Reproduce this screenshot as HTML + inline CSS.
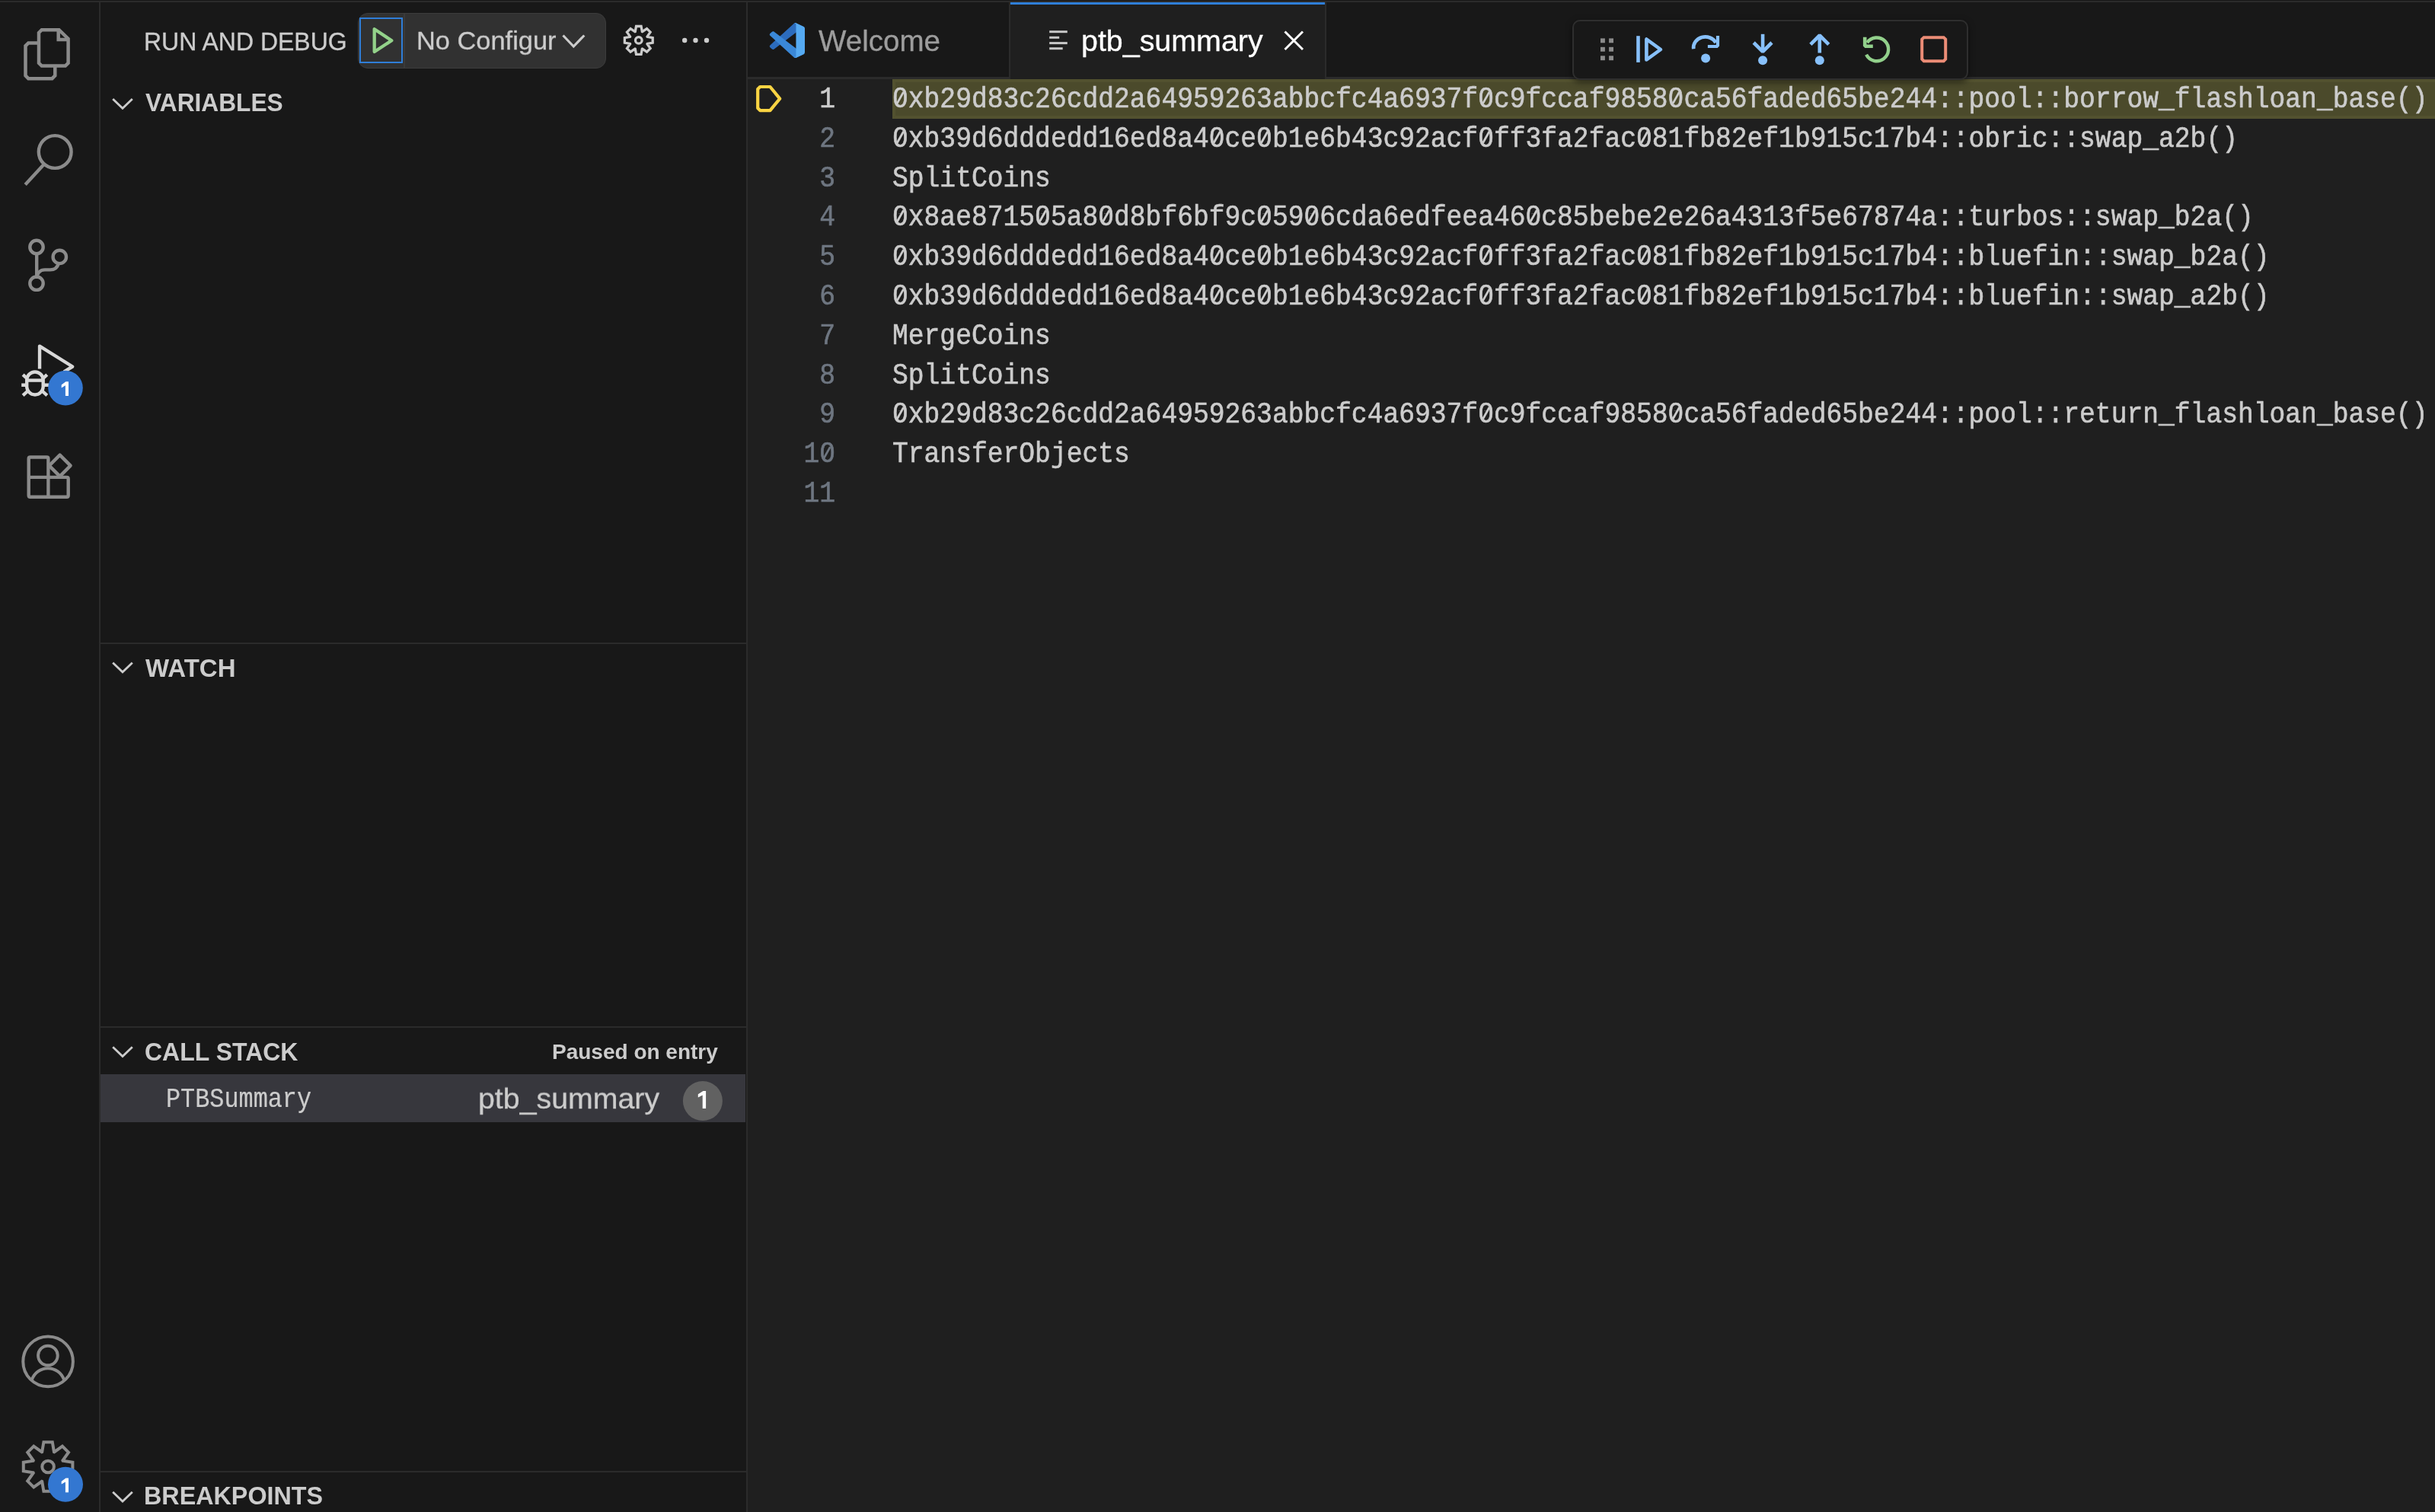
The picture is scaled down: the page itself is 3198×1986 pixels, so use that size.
<!DOCTYPE html>
<html><head><meta charset="utf-8">
<style>
html,body{margin:0;padding:0;width:3198px;height:1986px;overflow:hidden;background:#181818;}
body{position:relative;font-family:"Liberation Sans",sans-serif;color:#cccccc;}
.a{position:absolute;}
.t{position:absolute;white-space:pre;line-height:1;-webkit-font-smoothing:antialiased;will-change:transform;}
svg.ic{position:absolute;left:0;top:0;}
</style></head><body>
<div class="a" style="left:0px;top:0px;width:3198px;height:1px;background:#171717;"></div>
<div class="a" style="left:0px;top:1px;width:3198px;height:2px;background:#2b2b2b;"></div>
<div class="a" style="left:0px;top:3px;width:130px;height:1983px;background:#181818;"></div>
<div class="a" style="left:130px;top:3px;width:2px;height:1983px;background:#2b2b2b;"></div>
<div class="a" style="left:132px;top:3px;width:848px;height:1983px;background:#181818;"></div>
<div class="a" style="left:980px;top:3px;width:2px;height:1983px;background:#2b2b2b;"></div>
<div class="a" style="left:982px;top:3px;width:2216px;height:1983px;background:#1f1f1f;"></div>
<div class="a" style="left:982px;top:3px;width:2216px;height:98px;background:#181818;"></div>
<div class="a" style="left:982px;top:101px;width:2216px;height:3px;background:#2b2b2b;"></div>
<div class="a" style="left:1325px;top:3px;width:2px;height:101px;background:#2b2b2b;"></div>
<div class="a" style="left:1327px;top:3px;width:413px;height:101px;background:#1f1f1f;"></div>
<div class="a" style="left:1740px;top:3px;width:2px;height:101px;background:#2b2b2b;"></div>
<div class="a" style="left:1327px;top:3px;width:413px;height:3px;background:#2f7ed8;"></div>
<div class="a" style="left:470px;top:17px;width:326px;height:72.5px;background:#313131;border:1px solid #3c3c3c;box-sizing:border-box;border-radius:13px;"></div>
<div class="a" style="left:472px;top:23px;width:57.2px;height:60px;background:transparent;border:2px solid #2f7ed8;box-sizing:border-box;"></div>
<div class="a" style="left:529.5px;top:18px;width:2px;height:70.5px;background:#3a3a3a;"></div>
<div class="a" style="left:132px;top:844px;width:848px;height:2px;background:#2b2b2b;"></div>
<div class="a" style="left:132px;top:1348px;width:848px;height:2px;background:#2b2b2b;"></div>
<div class="a" style="left:132px;top:1932px;width:848px;height:2px;background:#2b2b2b;"></div>
<div class="a" style="left:132px;top:1411px;width:847px;height:63px;background:#37373d;"></div>
<div class="a" style="left:1172px;top:104px;width:2034px;height:52px;background:#4b4a2b;box-shadow:inset 0 0 0 4px #52512f;"></div>
<div class="a" style="left:2065px;top:26.3px;width:520px;height:78.5px;background:#181818;border:2px solid #2e2e2e;box-sizing:border-box;border-radius:10px;box-shadow:0 3px 9px rgba(0,0,0,0.5);"></div>
<svg class="ic" width="3198" height="1986" viewBox="0 0 3198 1986">
<g fill="none" stroke="#8b8b8b" stroke-width="4.5" stroke-linejoin="miter"><path d="M51,43 L54.8,39.2 L77.5,39.2 L89.6,51 L89.6,82.8 L85.8,86.6 L54.8,86.6 L51,82.8 Z"/><path d="M76.7,39.2 L76.7,51.9 L89.6,51.9"/><path d="M51,56.5 L37.3,56.5 L33.5,60.3 L33.5,99.4 L37.3,103.2 L68.5,103.2 L72.3,99.4 L72.3,86.6"/></g>
<g fill="none" stroke="#8b8b8b" stroke-width="4.4"><circle cx="72.2" cy="199.5" r="21.4"/><path d="M57.6,216 L33.2,242.6"/></g>
<g fill="none" stroke="#8b8b8b" stroke-width="4.4"><circle cx="48" cy="324.5" r="8.7"/><circle cx="48" cy="372.2" r="8.7"/><circle cx="78.3" cy="337.4" r="8.7"/><path d="M48.2,333.2 L48.2,363.5"/><path d="M48.2,366 C48.6,358 53,354.4 59,354.4 L66,354.4 C72,354.4 75.5,351 77,345.8"/></g>
<g fill="none" stroke="#d8d8d8" stroke-width="4.4"><path d="M52.05,484.5 L52.05,454.6 L95.2,481.5 L84,488.3" stroke-linejoin="round"/><path d="M35.2,499.2 A10.75,10.75 0 0 1 56.7,499.2 L56.7,507.6 A10.75,10.9 0 0 1 35.2,507.6 Z"/><path d="M35.2,499.6 L56.7,499.6"/><path d="M28.2,505.7 L35.2,505.7 M56.7,505.7 L64,505.7 M30.1,492.2 L36,497.6 M61.8,492.2 L55.9,497.6 M30.1,519.4 L36,514 M61.8,519.4 L55.9,514"/></g>
<circle cx="86" cy="509.6" r="22.8" fill="#3377d1"/>
<path fill="#ffffff" d="M80.7,505.6 L86.4,501.2 L90,501.2 L90,520 L85.9,520 L85.9,506.2 L80.7,509.4 Z"/>
<g fill="none" stroke="#8b8b8b" stroke-width="4.4" stroke-linejoin="round"><path d="M39.7,600.5 L61.4,600.5 Q63.4,600.5 63.4,602.5 L63.4,652.7 M37.7,602.5 Q37.7,600.5 39.7,600.5 M37.7,602.5 L37.7,650.7 Q37.7,652.7 39.7,652.7 L87.7,652.7 Q89.7,652.7 89.7,650.7 L89.7,628.9 Q89.7,626.9 87.7,626.9 L37.7,626.9"/><path d="M78.6,597.6 L92.6,611.6 L78.6,625.6 L64.6,611.6 Z"/></g>
<g fill="none" stroke="#8b8b8b" stroke-width="4"><circle cx="63.1" cy="1788.4" r="32.8"/><circle cx="62.9" cy="1780.5" r="12.8"/><path d="M41.8,1812.4 A22.3,22.3 0 0 1 84.1,1812.4"/></g>
<g fill="none" stroke="#8b8b8b" stroke-width="4"><path d="M55.23,1907.03 L57.40,1894.20 L68.80,1894.20 L70.97,1907.03 L71.31,1907.17 L81.91,1899.63 L89.97,1907.69 L82.43,1918.29 L82.57,1918.63 L95.40,1920.80 L95.40,1932.20 L82.57,1934.37 L82.43,1934.71 L89.97,1945.31 L81.91,1953.37 L71.31,1945.83 L70.97,1945.97 L68.80,1958.80 L57.40,1958.80 L55.23,1945.97 L54.89,1945.83 L44.29,1953.37 L36.23,1945.31 L43.77,1934.71 L43.63,1934.37 L30.80,1932.20 L30.80,1920.80 L43.63,1918.63 L43.77,1918.29 L36.23,1907.69 L44.29,1899.63 L54.89,1907.17Z"/><circle cx="63.1" cy="1926.5" r="7.8"/></g>
<circle cx="86" cy="1949.8" r="23" fill="#3377d1"/>
<path fill="#ffffff" d="M80.7,1945.8 L86.4,1941.4 L90,1941.4 L90,1960.2 L85.9,1960.2 L85.9,1946.4 L80.7,1949.6 Z"/>
<path d="M491.7,38.3 L491.7,68 L514.3,53.2 Z" fill="none" stroke="#93d28a" stroke-width="4.3" stroke-linejoin="round"/>
<path d="M739.5,46.5 L753.3,61 L767.3,46.5" fill="none" stroke="#cccccc" stroke-width="3.2"/>
<g fill="none" stroke="#cccccc" stroke-width="3.3"><path d="M834.23,41.59 L835.55,34.48 L842.05,34.48 L843.37,41.59 L843.57,41.67 L849.53,37.58 L854.12,42.17 L850.03,48.13 L850.11,48.33 L857.22,49.65 L857.22,56.15 L850.11,57.47 L850.03,57.67 L854.12,63.63 L849.53,68.22 L843.57,64.13 L843.37,64.21 L842.05,71.32 L835.55,71.32 L834.23,64.21 L834.03,64.13 L828.07,68.22 L823.48,63.63 L827.57,57.67 L827.49,57.47 L820.38,56.15 L820.38,49.65 L827.49,48.33 L827.57,48.13 L823.48,42.17 L828.07,37.58 L834.03,41.67Z"/><circle cx="838.8" cy="52.9" r="4.3"/></g>
<g fill="#cccccc"><circle cx="899.2" cy="53" r="3.2"/><circle cx="913.5" cy="53" r="3.2"/><circle cx="928" cy="53" r="3.2"/></g>
<path d="M148.2,130 L161,142.3 L173.8,130" fill="none" stroke="#cccccc" stroke-width="2.8"/>
<path d="M148.2,870.5 L161,882.8 L173.8,870.5" fill="none" stroke="#cccccc" stroke-width="2.8"/>
<path d="M148.2,1375.2 L161,1387.6 L173.8,1375.2" fill="none" stroke="#cccccc" stroke-width="2.8"/>
<path d="M148.2,1959.7 L161,1972 L173.8,1959.7" fill="none" stroke="#cccccc" stroke-width="2.8"/>
<g transform="translate(1010.8,30) scale(0.462)"><path fill="#2c6cbd" d="M96.4614 10.7962L75.8569 0.875542C73.4719 -0.272773 70.6217 0.211611 68.75 2.08333L1.29858 63.5832C-0.515693 65.2373 -0.513607 68.0937 1.30308 69.7452L6.81272 74.754C8.29793 76.1042 10.5347 76.2036 12.1338 74.9905L93.3609 13.3699C96.0859 11.3026 100 13.2462 100 16.6667V16.4275C100 14.0265 98.6246 11.8378 96.4614 10.7962Z"/><path fill="#3a88d8" d="M96.4614 89.2038L75.8569 99.1245C73.4719 100.273 70.6217 99.7884 68.75 97.9167L1.29858 36.4169C-0.515693 34.7627 -0.513607 31.9063 1.30308 30.2548L6.81272 25.246C8.29793 23.8958 10.5347 23.7964 12.1338 25.0095L93.3609 86.6301C96.0859 88.6974 100 86.7538 100 83.3334V83.5726C100 85.9735 98.6246 88.1622 96.4614 89.2038Z"/><path fill="#55aaf2" d="M75.8578 99.1263C73.4721 100.274 70.6219 99.7885 68.75 97.9166C71.0564 100.223 75 98.5895 75 95.3278V4.67213C75 1.41039 71.0564 -0.223106 68.75 2.08329C70.6219 0.211402 73.4721 -0.273666 75.8578 0.873633L96.4587 10.7807C98.6234 11.8217 100 14.0112 100 16.4132V83.5871C100 85.9891 98.6234 88.1786 96.4586 89.2196L75.8578 99.1263Z"/></g>
<g fill="#c8c8c8"><rect x="1378.2" y="40.2" width="23.6" height="3"/><rect x="1378.2" y="47.8" width="13" height="3"/><rect x="1378.2" y="55.1" width="23.6" height="3"/><rect x="1378.2" y="62.2" width="17.5" height="3"/></g>
<path d="M1687.5,41.5 L1711,65 M1711,41.5 L1687.5,65" fill="none" stroke="#ffffff" stroke-width="3"/>
<path d="M998.2,114 L1011.4,114 L1024.2,129.6 L1011.4,145.1 L998.2,145.1 L995.2,142.1 L995.2,117 Z" fill="none" stroke="#fad443" stroke-width="4.2" stroke-linejoin="round"/>
<g fill="#8b8b8b"><rect x="2102" y="50.4" width="5.9" height="5.9"/><rect x="2102" y="61.8" width="5.9" height="5.9"/><rect x="2102" y="73.3" width="5.9" height="5.9"/><rect x="2113.1" y="50.4" width="5.9" height="5.9"/><rect x="2113.1" y="61.8" width="5.9" height="5.9"/><rect x="2113.1" y="73.3" width="5.9" height="5.9"/></g>
<g fill="none" stroke="#87c0fb" stroke-width="4.6"><path d="M2151.5,47.2 L2151.5,81.9"/><path d="M2162.4,51.5 L2162.4,78.5 L2181,65 Z" stroke-linejoin="round"/><path d="M2224.2,64.3 A15.6,14.2 0 0 1 2253.5,56"/><path d="M2253.9,46.9 L2258.1,46.9 L2258.1,60.5 L2255.7,62.9 L2242.9,62.9 L2242.9,59.1 L2253.9,59.1 Z" fill="#87c0fb" stroke="none"/><path d="M2315.1,44.8 L2315.1,67"/><path d="M2303.2,56 L2315.1,67.9 L2327,56" stroke-linejoin="bevel"/><path d="M2389.8,69.5 L2389.8,47"/><path d="M2377.9,58.4 L2389.8,46.5 L2401.7,58.4" stroke-linejoin="bevel"/></g>
<g fill="#87c0fb"><circle cx="2240.1" cy="76.4" r="6"/><circle cx="2315.1" cy="79.3" r="6"/><circle cx="2389.8" cy="79.3" r="6"/></g>
<path d="M2451.1,71.8 A15.35,15.35 0 1 0 2452.2,56.05" fill="none" stroke="#92d08b" stroke-width="4.4"/>
<path d="M2446.9,48.8 L2451.5,48.8 L2451.5,58.4 L2459.8,58.4 L2459.8,63 L2449.3,63 L2446.9,60.6 Z" fill="#92d08b"/>
<path d="M2526.7,49.2 L2552.7,49.2 L2555.2,51.7 L2555.2,77.7 L2552.7,80.2 L2526.7,80.2 L2524.2,77.7 L2524.2,51.7 Z" fill="none" stroke="#eb8c76" stroke-width="4"/>
<circle cx="922.9" cy="1446" r="26" fill="#616161"/>
<path fill="#ffffff" d="M916.8,1437.3 L923.5,1432.9 L927.1,1432.9 L927.1,1456.1 L922.7,1456.1 L922.7,1438.6 L916.8,1441.4 Z"/>
</svg>
<div class="t" style="left:189.00px;top:38.81px;font-size:32px;color:#cccccc;font-weight:400;font-family:'Liberation Sans',sans-serif;-webkit-text-stroke:0.3px #cccccc;transform:scaleY(1.04);transform-origin:0 27.09px;">RUN AND DEBUG</div>
<div class="t" style="left:191.00px;top:120.17px;font-size:31.7px;color:#cccccc;font-weight:700;font-family:'Liberation Sans',sans-serif;transform:scaleY(1.03);transform-origin:0 26.83px;">VARIABLES</div>
<div class="t" style="left:190.80px;top:860.97px;font-size:33px;color:#cccccc;font-weight:700;font-family:'Liberation Sans',sans-serif;transform:scaleY(1.03);transform-origin:0 27.93px;">WATCH</div>
<div class="t" style="left:189.80px;top:1365.81px;font-size:32px;color:#cccccc;font-weight:700;font-family:'Liberation Sans',sans-serif;transform:scaleY(1.03);transform-origin:0 27.09px;">CALL STACK</div>
<div class="t" style="left:725.20px;top:1367.50px;font-size:28px;color:#cccccc;font-weight:700;font-family:'Liberation Sans',sans-serif;">Paused on entry</div>
<div class="t" style="left:189.00px;top:1948.66px;font-size:32.3px;color:#cccccc;font-weight:700;font-family:'Liberation Sans',sans-serif;transform:scaleY(1.03);transform-origin:0 27.34px;">BREAKPOINTS</div>
<div class="t" style="left:546.70px;top:35.68px;font-size:34.4px;color:#cccccc;font-weight:400;font-family:'Liberation Sans',sans-serif;-webkit-text-stroke:0.3px #cccccc;transform:scaleY(0.96);transform-origin:0 29.12px;">No Configur</div>
<div class="t" style="left:1075.10px;top:35.43px;font-size:38.6px;color:#9d9d9d;font-weight:400;font-family:'Liberation Sans',sans-serif;-webkit-text-stroke:0.3px #9d9d9d;">Welcome</div>
<div class="t" style="left:1419.50px;top:33.85px;font-size:39.4px;color:#ffffff;font-weight:400;font-family:'Liberation Sans',sans-serif;-webkit-text-stroke:0.3px #ffffff;">ptb_summary</div>
<div class="t" style="left:218.00px;top:1430.19px;font-size:31.85px;color:#cccccc;font-weight:400;font-family:'Liberation Mono',monospace;-webkit-text-stroke:0.2px #cccccc;transform:scaleY(1.16);transform-origin:0 24.41px;">PTBSummary</div>
<div class="t" style="left:628.20px;top:1423.13px;font-size:39.3px;color:#cccccc;font-weight:400;font-family:'Liberation Sans',sans-serif;-webkit-text-stroke:0.3px #cccccc;transform:scaleY(0.98);transform-origin:0 33.27px;">ptb_summary</div>
<div class="t" style="left:1172.00px;top:114.94px;font-size:34.65px;color:#cccccc;font-weight:400;font-family:'Liberation Mono',monospace;-webkit-text-stroke:0.55px #cccccc;transform:scaleY(1.1);transform-origin:0 26.56px;">0xb29d83c26cdd2a64959263abbcfc4a6937f0c9fccaf98580ca56faded65be244::pool::borrow_flashloan_base()</div>
<div class="t" style="left:898.5px;width:198px;text-align:right;top:114.94px;font-size:34.65px;color:#cccccc;font-family:'Liberation Mono',monospace;transform:scaleY(1.1);transform-origin:0 26.56px;-webkit-text-stroke:0.55px #cccccc;">1</div>
<div class="t" style="left:1172.00px;top:166.74px;font-size:34.65px;color:#cccccc;font-weight:400;font-family:'Liberation Mono',monospace;-webkit-text-stroke:0.55px #cccccc;transform:scaleY(1.1);transform-origin:0 26.56px;">0xb39d6dddedd16ed8a40ce0b1e6b43c92acf0ff3fa2fac081fb82ef1b915c17b4::obric::swap_a2b()</div>
<div class="t" style="left:898.5px;width:198px;text-align:right;top:166.74px;font-size:34.65px;color:#6e7681;font-family:'Liberation Mono',monospace;transform:scaleY(1.1);transform-origin:0 26.56px;-webkit-text-stroke:0.55px #6e7681;">2</div>
<div class="t" style="left:1172.00px;top:218.54px;font-size:34.65px;color:#cccccc;font-weight:400;font-family:'Liberation Mono',monospace;-webkit-text-stroke:0.55px #cccccc;transform:scaleY(1.1);transform-origin:0 26.56px;">SplitCoins</div>
<div class="t" style="left:898.5px;width:198px;text-align:right;top:218.54px;font-size:34.65px;color:#6e7681;font-family:'Liberation Mono',monospace;transform:scaleY(1.1);transform-origin:0 26.56px;-webkit-text-stroke:0.55px #6e7681;">3</div>
<div class="t" style="left:1172.00px;top:270.34px;font-size:34.65px;color:#cccccc;font-weight:400;font-family:'Liberation Mono',monospace;-webkit-text-stroke:0.55px #cccccc;transform:scaleY(1.1);transform-origin:0 26.56px;">0x8ae871505a80d8bf6bf9c05906cda6edfeea460c85bebe2e26a4313f5e67874a::turbos::swap_b2a()</div>
<div class="t" style="left:898.5px;width:198px;text-align:right;top:270.34px;font-size:34.65px;color:#6e7681;font-family:'Liberation Mono',monospace;transform:scaleY(1.1);transform-origin:0 26.56px;-webkit-text-stroke:0.55px #6e7681;">4</div>
<div class="t" style="left:1172.00px;top:322.14px;font-size:34.65px;color:#cccccc;font-weight:400;font-family:'Liberation Mono',monospace;-webkit-text-stroke:0.55px #cccccc;transform:scaleY(1.1);transform-origin:0 26.56px;">0xb39d6dddedd16ed8a40ce0b1e6b43c92acf0ff3fa2fac081fb82ef1b915c17b4::bluefin::swap_b2a()</div>
<div class="t" style="left:898.5px;width:198px;text-align:right;top:322.14px;font-size:34.65px;color:#6e7681;font-family:'Liberation Mono',monospace;transform:scaleY(1.1);transform-origin:0 26.56px;-webkit-text-stroke:0.55px #6e7681;">5</div>
<div class="t" style="left:1172.00px;top:373.94px;font-size:34.65px;color:#cccccc;font-weight:400;font-family:'Liberation Mono',monospace;-webkit-text-stroke:0.55px #cccccc;transform:scaleY(1.1);transform-origin:0 26.56px;">0xb39d6dddedd16ed8a40ce0b1e6b43c92acf0ff3fa2fac081fb82ef1b915c17b4::bluefin::swap_a2b()</div>
<div class="t" style="left:898.5px;width:198px;text-align:right;top:373.94px;font-size:34.65px;color:#6e7681;font-family:'Liberation Mono',monospace;transform:scaleY(1.1);transform-origin:0 26.56px;-webkit-text-stroke:0.55px #6e7681;">6</div>
<div class="t" style="left:1172.00px;top:425.74px;font-size:34.65px;color:#cccccc;font-weight:400;font-family:'Liberation Mono',monospace;-webkit-text-stroke:0.55px #cccccc;transform:scaleY(1.1);transform-origin:0 26.56px;">MergeCoins</div>
<div class="t" style="left:898.5px;width:198px;text-align:right;top:425.74px;font-size:34.65px;color:#6e7681;font-family:'Liberation Mono',monospace;transform:scaleY(1.1);transform-origin:0 26.56px;-webkit-text-stroke:0.55px #6e7681;">7</div>
<div class="t" style="left:1172.00px;top:477.54px;font-size:34.65px;color:#cccccc;font-weight:400;font-family:'Liberation Mono',monospace;-webkit-text-stroke:0.55px #cccccc;transform:scaleY(1.1);transform-origin:0 26.56px;">SplitCoins</div>
<div class="t" style="left:898.5px;width:198px;text-align:right;top:477.54px;font-size:34.65px;color:#6e7681;font-family:'Liberation Mono',monospace;transform:scaleY(1.1);transform-origin:0 26.56px;-webkit-text-stroke:0.55px #6e7681;">8</div>
<div class="t" style="left:1172.00px;top:529.34px;font-size:34.65px;color:#cccccc;font-weight:400;font-family:'Liberation Mono',monospace;-webkit-text-stroke:0.55px #cccccc;transform:scaleY(1.1);transform-origin:0 26.56px;">0xb29d83c26cdd2a64959263abbcfc4a6937f0c9fccaf98580ca56faded65be244::pool::return_flashloan_base()</div>
<div class="t" style="left:898.5px;width:198px;text-align:right;top:529.34px;font-size:34.65px;color:#6e7681;font-family:'Liberation Mono',monospace;transform:scaleY(1.1);transform-origin:0 26.56px;-webkit-text-stroke:0.55px #6e7681;">9</div>
<div class="t" style="left:1172.00px;top:581.14px;font-size:34.65px;color:#cccccc;font-weight:400;font-family:'Liberation Mono',monospace;-webkit-text-stroke:0.55px #cccccc;transform:scaleY(1.1);transform-origin:0 26.56px;">TransferObjects</div>
<div class="t" style="left:898.5px;width:198px;text-align:right;top:581.14px;font-size:34.65px;color:#6e7681;font-family:'Liberation Mono',monospace;transform:scaleY(1.1);transform-origin:0 26.56px;-webkit-text-stroke:0.55px #6e7681;">10</div>
<div class="t" style="left:898.5px;width:198px;text-align:right;top:632.94px;font-size:34.65px;color:#6e7681;font-family:'Liberation Mono',monospace;transform:scaleY(1.1);transform-origin:0 26.56px;-webkit-text-stroke:0.55px #6e7681;">11</div>
<svg class="ic" width="3198" height="1986" viewBox="0 0 3198 1986"><rect x="1179.00" y="124.90" width="6.8" height="6.2" fill="#4b4a2b"/><path d="M1178.20,135.90 L1186.60,120.90" stroke="#cccccc" stroke-width="2.8"/><rect x="1948.36" y="124.90" width="6.8" height="6.2" fill="#4b4a2b"/><path d="M1947.56,135.90 L1955.96,120.90" stroke="#cccccc" stroke-width="2.8"/><rect x="2197.88" y="124.90" width="6.8" height="6.2" fill="#4b4a2b"/><path d="M2197.08,135.90 L2205.48,120.90" stroke="#cccccc" stroke-width="2.8"/><rect x="1179.00" y="176.70" width="6.8" height="6.2" fill="#1f1f1f"/><path d="M1178.20,187.70 L1186.60,172.70" stroke="#cccccc" stroke-width="2.8"/><rect x="1594.87" y="176.70" width="6.8" height="6.2" fill="#1f1f1f"/><path d="M1594.07,187.70 L1602.47,172.70" stroke="#cccccc" stroke-width="2.8"/><rect x="1657.25" y="176.70" width="6.8" height="6.2" fill="#1f1f1f"/><path d="M1656.45,187.70 L1664.85,172.70" stroke="#cccccc" stroke-width="2.8"/><rect x="1948.36" y="176.70" width="6.8" height="6.2" fill="#1f1f1f"/><path d="M1947.56,187.70 L1955.96,172.70" stroke="#cccccc" stroke-width="2.8"/><rect x="2156.29" y="176.70" width="6.8" height="6.2" fill="#1f1f1f"/><path d="M2155.49,187.70 L2163.89,172.70" stroke="#cccccc" stroke-width="2.8"/><rect x="1179.00" y="280.30" width="6.8" height="6.2" fill="#1f1f1f"/><path d="M1178.20,291.30 L1186.60,276.30" stroke="#cccccc" stroke-width="2.8"/><rect x="1366.14" y="280.30" width="6.8" height="6.2" fill="#1f1f1f"/><path d="M1365.34,291.30 L1373.74,276.30" stroke="#cccccc" stroke-width="2.8"/><rect x="1449.31" y="280.30" width="6.8" height="6.2" fill="#1f1f1f"/><path d="M1448.51,291.30 L1456.91,276.30" stroke="#cccccc" stroke-width="2.8"/><rect x="1657.25" y="280.30" width="6.8" height="6.2" fill="#1f1f1f"/><path d="M1656.45,291.30 L1664.85,276.30" stroke="#cccccc" stroke-width="2.8"/><rect x="1719.63" y="280.30" width="6.8" height="6.2" fill="#1f1f1f"/><path d="M1718.83,291.30 L1727.23,276.30" stroke="#cccccc" stroke-width="2.8"/><rect x="2010.74" y="280.30" width="6.8" height="6.2" fill="#1f1f1f"/><path d="M2009.94,291.30 L2018.34,276.30" stroke="#cccccc" stroke-width="2.8"/><rect x="1179.00" y="332.10" width="6.8" height="6.2" fill="#1f1f1f"/><path d="M1178.20,343.10 L1186.60,328.10" stroke="#cccccc" stroke-width="2.8"/><rect x="1594.87" y="332.10" width="6.8" height="6.2" fill="#1f1f1f"/><path d="M1594.07,343.10 L1602.47,328.10" stroke="#cccccc" stroke-width="2.8"/><rect x="1657.25" y="332.10" width="6.8" height="6.2" fill="#1f1f1f"/><path d="M1656.45,343.10 L1664.85,328.10" stroke="#cccccc" stroke-width="2.8"/><rect x="1948.36" y="332.10" width="6.8" height="6.2" fill="#1f1f1f"/><path d="M1947.56,343.10 L1955.96,328.10" stroke="#cccccc" stroke-width="2.8"/><rect x="2156.29" y="332.10" width="6.8" height="6.2" fill="#1f1f1f"/><path d="M2155.49,343.10 L2163.89,328.10" stroke="#cccccc" stroke-width="2.8"/><rect x="1179.00" y="383.90" width="6.8" height="6.2" fill="#1f1f1f"/><path d="M1178.20,394.90 L1186.60,379.90" stroke="#cccccc" stroke-width="2.8"/><rect x="1594.87" y="383.90" width="6.8" height="6.2" fill="#1f1f1f"/><path d="M1594.07,394.90 L1602.47,379.90" stroke="#cccccc" stroke-width="2.8"/><rect x="1657.25" y="383.90" width="6.8" height="6.2" fill="#1f1f1f"/><path d="M1656.45,394.90 L1664.85,379.90" stroke="#cccccc" stroke-width="2.8"/><rect x="1948.36" y="383.90" width="6.8" height="6.2" fill="#1f1f1f"/><path d="M1947.56,394.90 L1955.96,379.90" stroke="#cccccc" stroke-width="2.8"/><rect x="2156.29" y="383.90" width="6.8" height="6.2" fill="#1f1f1f"/><path d="M2155.49,394.90 L2163.89,379.90" stroke="#cccccc" stroke-width="2.8"/><rect x="1179.00" y="539.30" width="6.8" height="6.2" fill="#1f1f1f"/><path d="M1178.20,550.30 L1186.60,535.30" stroke="#cccccc" stroke-width="2.8"/><rect x="1948.36" y="539.30" width="6.8" height="6.2" fill="#1f1f1f"/><path d="M1947.56,550.30 L1955.96,535.30" stroke="#cccccc" stroke-width="2.8"/><rect x="2197.88" y="539.30" width="6.8" height="6.2" fill="#1f1f1f"/><path d="M2197.08,550.30 L2205.48,535.30" stroke="#cccccc" stroke-width="2.8"/><rect x="1082.71" y="591.10" width="6.8" height="6.2" fill="#1f1f1f"/><path d="M1081.91,602.10 L1090.31,587.10" stroke="#6e7681" stroke-width="2.8"/></svg>
</body></html>
